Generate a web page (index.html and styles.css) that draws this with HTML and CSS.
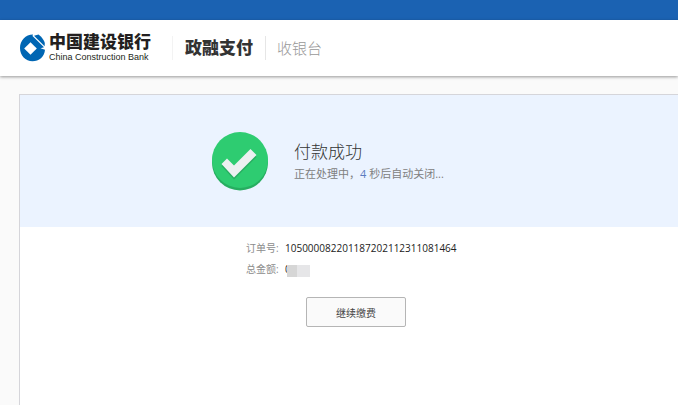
FILE: index.html
```html
<!DOCTYPE html>
<html lang="zh-CN">
<head>
    <meta charset="UTF-8">
    <meta name="viewport" content="width=device-width, initial-scale=1.0">
    <title>收银台</title>
    <link rel="stylesheet" href="styles.css">
</head>
<body>
    <div class="topbar"></div>
    <header class="header">
        <div class="bank">
            <svg class="bank-logo" viewBox="0 0 26 28" aria-hidden="true">
                <path d="M13 0.500 C5.500 0.500 0 6.500 0 14 C0 21.500 5.500 27.300 12.500 27.300 C19 27.300 24.500 23 25 15.800 L20.500 14.300 L24 13.300 L12.500 2 Z" fill="#0066b3"/>
                <path d="M14 1.800 L18.500 0.400 Q23 3.500 24.800 9 L24.600 12.300 Z" fill="#0066b3"/>
                <path d="M10.500 8.200 L16.800 14.500 L10.500 20.800 L4.200 14.500 Z" fill="#fff"/>
            </svg>
            <div class="bank-name">
                <span class="bank-cn">中国建设银行</span>
                <span class="bank-en">China Construction Bank</span>
            </div>
        </div>
        <div class="product">政融支付</div>
        <div class="page-name">收银台</div>
    </header>

    <main class="panel">
        <section class="result">
            <svg class="result-icon" viewBox="0 0 56 59" aria-hidden="true">
                <circle cx="28" cy="30.5" r="28" fill="#27ae60"/>
                <circle cx="28" cy="28" r="28" fill="#2ecc71"/>
                <path d="M9.5 34 L15 28.5 L22 35.500 L38.500 19 L44.500 25 L22 47.500 Z" fill="#27ae60"/>
                <path d="M9.5 32 L15 26.500 L22 33.500 L38.500 17 L44.500 23 L22 45.500 Z" fill="#ecf0f1"/>
            </svg>
            <div class="result-text">
                <h1>付款成功</h1>
                <p>正在处理中，<span class="seconds">4</span> 秒后自动关闭...</p>
            </div>
        </section>
        <section class="order">
            <dl>
                <dt>订单号:</dt>
                <dd>105000082201187202112311081464</dd>
                <dt>总金额:</dt>
                <dd class="amount">0<span class="mask"></span></dd>
            </dl>
            <button type="button" class="btn">继续缴费</button>
        </section>
    </main>
</body>
</html>
```
FILE: styles.css
```css
* {
    box-sizing: border-box;
}
body {
    margin: 0;
    min-height: 100vh;
    display: flex;
    flex-direction: column;
    overflow-x: hidden;
    background: #fafafa;
    color: #333;
    font-family: "Open Sans", "Noto Sans CJK SC", sans-serif;
    font-size: 10px;
}
.topbar {
    height: 20px;
    background: #1b62b2;
}
.header {
    display: flex;
    align-items: center;
    height: 56px;
    padding: 0 20px;
    background: #fff;
    box-shadow: 0 1px 3px rgba(0, 0, 0, 0.4);
}
.bank {
    display: flex;
    align-items: center;
    gap: 3px;
}
.bank-logo {
    width: 26px;
    height: 28px;
}
.bank-name {
    display: flex;
    flex-direction: column;
    padding-bottom: 4px;
    color: #231f20;
}
.bank-cn {
    font-size: 17px;
    line-height: 22px;
    font-weight: 900;
    font-family: "Noto Sans CJK SC", sans-serif;
}
.bank-en {
    font-family: "Liberation Sans", Arial, sans-serif;
    font-size: 9px;
    line-height: 10px;
}
.product {
    margin-left: 21px;
    padding-left: 12px;
    border-left: 1px solid #f3f3f3;
    color: #333;
    font-size: 17px;
    line-height: 24px;
    font-weight: 900;
}
.page-name {
    margin-left: 12px;
    padding-left: 11px;
    border-left: 1px solid #e6e6e6;
    color: #999;
    font-size: 15px;
    line-height: 24px;
    font-weight: 300;
}
.panel {
    flex: 1;
    margin: 18px 0 0 19px;
    border: 1px solid #d5d5da;
    border-right: 0;
    border-bottom: 0;
    background: #fff;
}
.result {
    display: flex;
    align-items: center;
    gap: 26px;
    height: 132px;
    padding-left: 192px;
    background: #ebf3ff;
}
.result-icon {
    width: 56px;
    height: 59px;
}
.result-text {
    padding-top: 2px;
}
.result-text h1 {
    margin: 0;
    font-size: 17px;
    line-height: 24px;
    font-weight: 300;
}
.result-text p {
    margin: 0;
    color: #808080;
    font-size: 11px;
    line-height: 20px;
}
.seconds {
    color: #5b7bc0;
}
.order {
    padding: 11px 0 0 226px;
}
.order dl {
    display: grid;
    grid-template-columns: 39px 1fr;
    margin: 0 0 17px;
    line-height: 21px;
}
.order dt {
    color: #8c8c8c;
}
.order dd {
    margin: 0;
    color: #222;
}
.amount {
    display: flex;
    align-items: center;
}
.mask {
    width: 23px;
    height: 12px;
    margin: 3px 0 0 -4px;
    background: linear-gradient(to right, #d6d6d6 10px, #e6e6e8 10px);
}
.btn {
    width: 100px;
    height: 30px;
    margin-left: 60px;
    border: 1px solid #b5b5b5;
    border-radius: 2px;
    background: #fafafa;
    color: #444;
    font-family: inherit;
    font-size: 10px;
    cursor: pointer;
}
```
